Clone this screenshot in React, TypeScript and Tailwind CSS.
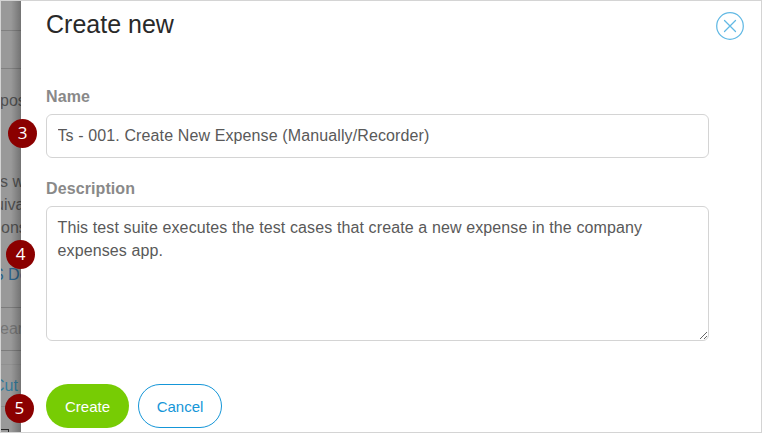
import React from "react";

function Badge({ label, className }: { label: string; className: string }) {
  return (
    <span
      className={`absolute z-20 flex h-[29.5px] w-[29.5px] items-center justify-center rounded-full bg-[#8b0000] pb-px font-['Open_Sans',sans-serif] text-[17px] font-medium text-white ${className}`}
    >
      {label}
    </span>
  );
}

function Backdrop() {
  return (
    <div className="relative flex w-5 shrink-0 flex-col overflow-hidden whitespace-nowrap bg-[#999] text-[16px] text-[#505050]">
      <div className="h-[30px] shrink-0 border-b border-[#808080]" />
      <div className="h-[38px] shrink-0 border-b border-[#808080]" />
      <div className="mt-[20px] -ml-px h-[23px] shrink-0 leading-[23px]">pos</div>
      <div className="mt-[58px] -ml-px h-[23px] shrink-0 leading-[23px]">s w</div>
      <div className="-ml-[6px] h-[23px] shrink-0 leading-[23px]">uiva</div>
      <div className="h-[23px] shrink-0 leading-[23px]">ons</div>
      <div className="mt-[24px] -ml-[8px] h-[23px] shrink-0 leading-[23px] text-[#2b638a]">S De</div>
      <div className="mt-[21px] -ml-px h-[44px] shrink-0 border-y border-[#7c7c7c] leading-[42px] text-[#757575]">ear</div>
      <div className="h-[14px] shrink-0 border-b border-[#909090]" />
      <div className="-ml-[8px] h-[42px] shrink-0 border-b border-[#888] leading-[42px] text-[#357b9b]">Cut</div>
      <div className="mt-[22px] h-[10px] w-[8px] shrink-0 border border-l-0 border-[#292929]" />
      <div className="absolute inset-y-0 right-0 w-2.5 bg-linear-to-r from-transparent to-black/25" />
    </div>
  );
}

function CloseIcon() {
  return (
    <svg className="h-7 w-7" viewBox="0 0 28 28" fill="none" stroke="#62b9e4" strokeWidth="1.25" strokeLinecap="round">
      <circle cx="14" cy="14" r="13.3" />
      <path d="M8.5 8.5 19.5 19.5M19.5 8.5 8.5 19.5" />
    </svg>
  );
}

export default function App() {
  return (
    <div className="relative flex h-[433px] w-[762px] overflow-hidden border border-[#d4d4d4] bg-white font-['Liberation_Sans',Arial,sans-serif]">
      <Backdrop />
      <main className="min-w-0 flex-1 pl-[25px]">
        <header className="flex h-[84px] justify-between pr-[17px]">
          <h1 className="mt-[7px] text-[25px] leading-[32px] text-[#292929]">Create new</h1>
          <button aria-label="Close" className="mt-[11px] h-7">
            <CloseIcon />
          </button>
        </header>
        <form className="flex w-[663px] flex-col">
          <label htmlFor="name" className="h-[29px] text-[16px] leading-[23px] font-bold tracking-[0.1px] text-[#898989]">
            Name
          </label>
          <input
            id="name"
            className="h-[44px] rounded-[6px] border border-[#d4d4d4] px-[10.5px] text-[16px] tracking-[0.115px] text-[#595959] outline-none"
            defaultValue="Ts - 001. Create New Expense (Manually/Recorder)"
          />
          <label htmlFor="description" className="mt-[19px] h-[29px] text-[16px] leading-[23px] font-bold tracking-[0.1px] text-[#898989]">
            Description
          </label>
          <textarea
            id="description"
            className="h-[135px] resize rounded-[6px] border border-[#d4d4d4] px-[10.5px] py-[9px] text-[16px] leading-[23px] tracking-[0.115px] text-[#595959] outline-none"
            defaultValue="This test suite executes the test cases that create a new expense in the company expenses app."
          />
          <div className="mt-[43px] flex gap-[9px] text-[15px]">
            <button type="button" className="h-11 w-[83px] rounded-full bg-[#77cc04] pt-0.5 text-white">
              Create
            </button>
            <button type="button" className="h-11 w-[84px] rounded-full border border-[#1596d8] pt-0.5 text-[#1596d8]">
              Cancel
            </button>
          </div>
        </form>
      </main>
      <Badge label="3" className="top-[117.7px] left-[6.8px]" />
      <Badge label="4" className="top-[238.7px] left-[4.8px]" />
      <Badge label="5" className="top-[392.7px] left-[3.7px]" />
    </div>
  );
}
